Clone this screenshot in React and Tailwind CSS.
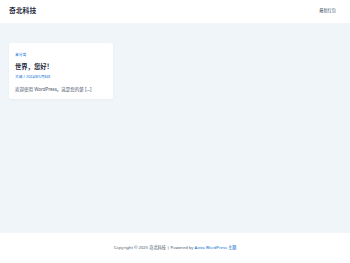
const App = () => {
  return (
    <div
      className="flex h-[263px] w-[350px] flex-col bg-white text-[#3a3a3a]"
      style={{ fontFamily: '"Noto Sans", "Noto Sans CJK SC", sans-serif' }}
    >
      {/* header */}
      <header className="flex h-[23px] shrink-0 items-center justify-between bg-white pl-[9px] pr-[14px]">
        <span className="text-[6.8px] font-bold leading-none text-[#1e293b]">奇北科技</span>
        <span className="text-[4.2px] leading-none text-[#475569]">最新红包</span>
      </header>

      {/* content */}
      <main className="flex-1 bg-[#f0f5fa] px-[9px] pt-[20px]">
        <article className="w-[104px] rounded-[2px] bg-white px-[6px] pb-[8px] pt-[10px] shadow-[0_1px_3px_rgba(0,0,0,0.04)]">
          <div className="text-[3.8px] leading-none text-[#046bd2]">未分类</div>
          <h2 className="mt-[7px] text-[6.3px] font-bold leading-none text-[#1e293b]">世界，您好！</h2>
          <div className="mt-[5px] text-[3.8px] leading-none text-[#046bd2]">大哥 / 2024年5月6日</div>
          <p className="mt-[8px] text-[4.5px] leading-none text-[#475569]">
            欢迎使用 WordPress。这是您的第 […]
          </p>
        </article>
      </main>

      {/* footer */}
      <footer className="flex h-[30px] shrink-0 items-center justify-center bg-white">
        <span className="text-[4.2px] leading-none text-[#475569]">
          Copyright © 2025 奇北科技 | Powered by{' '}
          <span className="text-[#046bd2]">Astra WordPress 主题</span>
        </span>
      </footer>
    </div>
  );
};

export default App;
